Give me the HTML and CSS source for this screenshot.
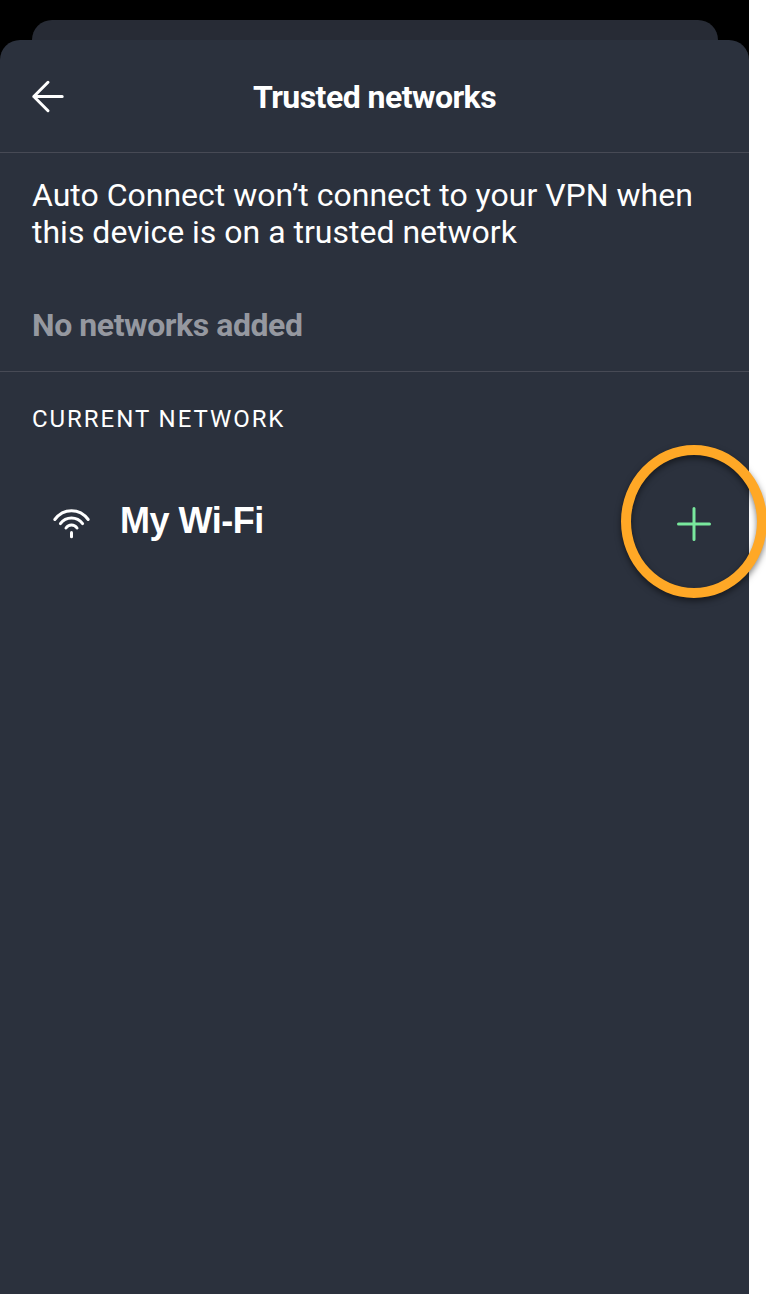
FILE: index.html
```html
<!DOCTYPE html>
<html lang="en">
<head>
    <meta charset="UTF-8">
    <meta name="viewport" content="width=device-width, initial-scale=1.0">
    <title>Trusted networks</title>
    <link rel="stylesheet" href="styles.css">
</head>
<body>
    <div class="phone">
        <div class="previous-sheet"></div>

        <main class="sheet">
            <header class="sheet-header">
                <svg class="back-icon" viewBox="0 0 34 34" width="34" height="34">
                    <path d="M17 3.3 L2.8 17.5 L17 31.7 M2.8 17.5 H31.2" />
                </svg>
                <h1>Trusted networks</h1>
            </header>

            <section class="trusted">
                <p class="description">Auto Connect won’t connect to your VPN when this device is on a trusted network</p>
                <p class="empty">No networks added</p>
            </section>

            <section class="current">
                <h2>CURRENT NETWORK</h2>
                <div class="network">
                    <svg class="wifi-icon" viewBox="0 0 40 32" width="40" height="32">
                        <path d="M2.8 11.5 C11.5 -0.2 27.5 -0.2 36.2 11.5" />
                        <path d="M8.4 15.6 C14 8.1 25 8.1 30.6 15.6" />
                        <path d="M14 20 C16.8 16.1 22.2 16.1 25 20" />
                        <path d="M19.5 24.5 V28.8" />
                    </svg>
                    <span class="network-name">My Wi-Fi</span>
                    <div class="add">
                        <svg class="add-icon" viewBox="0 0 36 36" width="36" height="36">
                            <path d="M18 2.5 V33.5 M2.5 18 H33.5" />
                        </svg>
                        <span class="highlight"></span>
                    </div>
                </div>
            </section>
        </main>
    </div>
</body>
</html>
```

FILE: styles.css
```css
* {
    box-sizing: border-box;
}

body {
    margin: 0;
    background: #fff;
    color: #fff;
    font-family: Roboto, "Liberation Sans", sans-serif;
    overflow: hidden;
}

h1,
h2,
p {
    margin: 0;
}

svg {
    display: block;
    fill: none;
    stroke: #fff;
    stroke-width: 3;
    stroke-linecap: round;
    stroke-linejoin: round;
}

.phone {
    display: flex;
    flex-direction: column;
    width: 749px;
    height: 1294px;
    padding-top: 20px;
    background: #000;
}

.previous-sheet {
    height: 40px;
    margin: 0 31px 0 32px;
    border-radius: 20px 20px 0 0;
    background: #272b35;
}

.sheet {
    position: relative;
    flex: 1;
    margin-top: -20px;
    border-radius: 20px 20px 0 0;
    background: #2b313d;
}

.sheet-header {
    display: grid;
    grid-template-columns: 34px 1fr 34px;
    align-items: center;
    height: 113px;
    padding: 0 31px;
    border-bottom: 1px solid #474a55;
}

.sheet-header h1 {
    padding-top: 2px;
    font-size: 32px;
    font-weight: 700;
    line-height: 38px;
    letter-spacing: -0.54px;
    text-align: center;
}

.trusted {
    height: 219px;
    padding: 24px 32px 0;
    border-bottom: 1px solid #474a55;
}

.description {
    font-size: 32px;
    line-height: 37px;
}

.empty {
    margin-top: 55px;
    color: #9598a0;
    font-size: 32px;
    font-weight: 700;
    line-height: 38px;
    letter-spacing: -0.43px;
}

.current {
    padding: 33px 37px 0 32px;
}

.current h2 {
    font-size: 24px;
    font-weight: 400;
    line-height: 28px;
    letter-spacing: 1.95px;
}

.network {
    display: flex;
    align-items: center;
    height: 72px;
    margin-top: 55px;
    padding-left: 20px;
}

.network-name {
    margin-left: 28px;
    padding-bottom: 7px;
    font-family: "Liberation Sans", Arial, sans-serif;
    font-size: 36px;
    font-weight: 700;
    line-height: 40px;
    letter-spacing: -0.5px;
}

.add {
    position: relative;
    margin-left: auto;
}

.add-icon {
    stroke: #79e89d;
}

.highlight {
    position: absolute;
    top: -61px;
    left: -55px;
    width: 146px;
    height: 153px;
    border: 10px solid #ffa826;
    border-radius: 50%;
    filter: drop-shadow(0 3px 3px rgba(0, 0, 0, 0.5));
}
```
